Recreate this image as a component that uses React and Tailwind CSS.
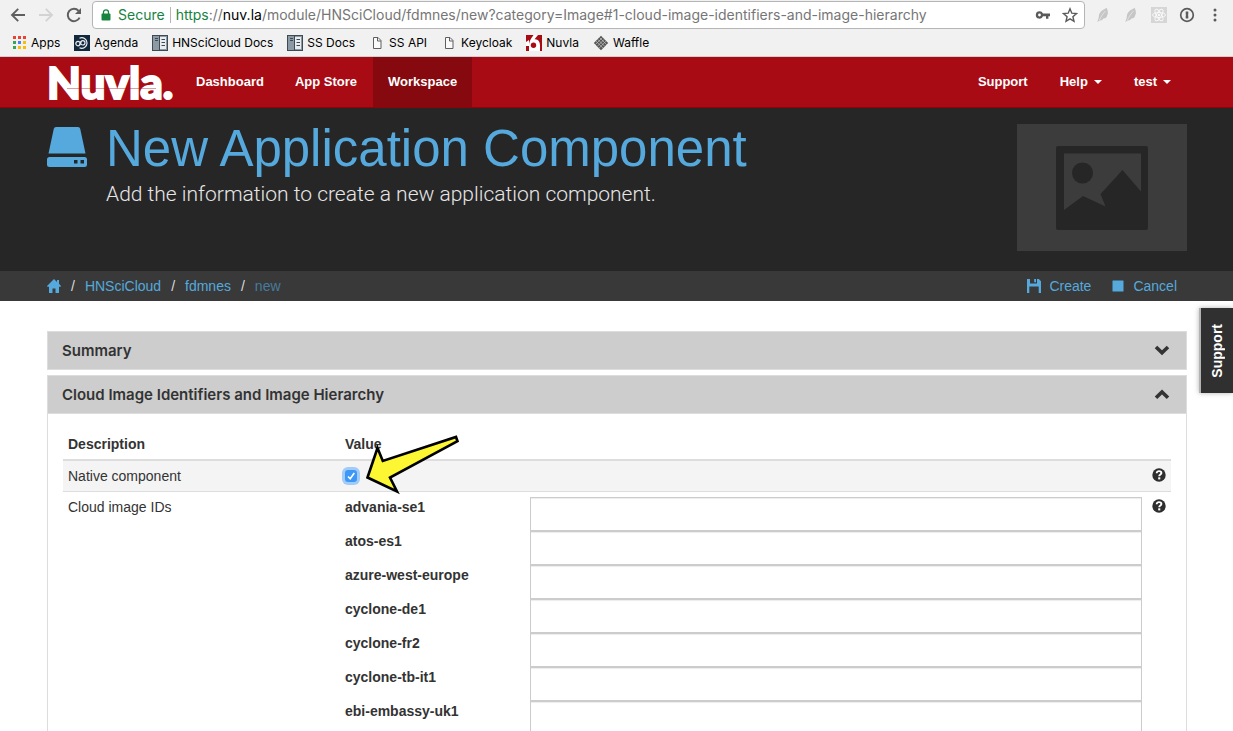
import React from "react";

const CLOUDS = [
  "advania-se1",
  "atos-es1",
  "azure-west-europe",
  "cyclone-de1",
  "cyclone-fr2",
  "cyclone-tb-it1",
  "ebi-embassy-uk1",
];

/* ---------- browser icons ---------- */

function BackIcon({ className }) {
  return (
    <svg viewBox="0 0 16 16" className={className} fill="none" stroke="currentColor" strokeWidth="1.9">
      <path d="M15 8H2.5M8.2 1.8 2 8l6.2 6.2" />
    </svg>
  );
}

function ReloadIcon() {
  return (
    <svg viewBox="0 0 16 16" className="size-4 text-[#5f5f5f]">
      <path d="M13.6 10.6A6.2 6.2 0 1 1 12.6 3.8" fill="none" stroke="currentColor" strokeWidth="2" />
      <path d="M15 1v6H9z" fill="currentColor" />
    </svg>
  );
}

function LockIcon() {
  return (
    <svg viewBox="0 0 10 12" className="h-3 w-2.5 text-[#16833f]">
      <rect x="0.5" y="4.5" width="9" height="7" rx="1" fill="currentColor" />
      <path d="M2.5 5V3.3a2.5 2.5 0 0 1 5 0V5" fill="none" stroke="currentColor" strokeWidth="1.3" />
    </svg>
  );
}

function KeyIcon() {
  return (
    <svg viewBox="0 0 16 8" className="h-2 w-4 text-[#5a5a5a]">
      <path
        fill="currentColor"
        fillRule="evenodd"
        d="M4.5 0.3a3.7 3.7 0 1 0 3.5 5H11v2.4h2.4V5.3H15V2.6H8A3.7 3.7 0 0 0 4.5 .3zm0 2.3a1.4 1.4 0 1 1 0 2.8 1.4 1.4 0 0 1 0-2.8z"
      />
    </svg>
  );
}

function StarIcon() {
  return (
    <svg viewBox="0 0 16 16" className="size-4 text-[#5a5a5a]" fill="none" stroke="currentColor" strokeWidth="1.4">
      <path d="M8 1.8l1.8 4.4 4.7.4-3.6 3.1 1.1 4.6L8 11.8l-4 2.5 1.1-4.6L1.500 6.600l4.700-.4z" />
    </svg>
  );
}

function FeatherIcon() {
  return (
    <svg viewBox="0 0 16 16" className="size-4">
      <path d="M11.500 0.800C9.500 2.500 6 3.500 4.500 6.500c-1 2-.5 3.500-1 5l-1.300 3.700 2.300-1.800c2 .2 3.200-.4 3.800-1.900 2 .2 3.400-.8 3.700-2.700 1.500-2 1-5.500-.5-8z" fill="#c6c6c6" />
      <path d="M10.500 4C8 6.500 6 9.500 4.500 13" fill="none" stroke="#e2e2e2" strokeWidth="1" />
    </svg>
  );
}

function AtomIcon() {
  return (
    <svg viewBox="0 0 16 16" className="size-4">
      <rect width="16" height="16" fill="#d6d6d6" />
      <g fill="none" stroke="#f8f8f8" strokeWidth="1">
        <ellipse cx="8" cy="8" rx="6.500" ry="2.500" />
        <ellipse cx="8" cy="8" rx="6.500" ry="2.500" transform="rotate(60 8 8)" />
        <ellipse cx="8" cy="8" rx="6.500" ry="2.500" transform="rotate(120 8 8)" />
      </g>
      <circle cx="8" cy="8" r="1.300" fill="#f8f8f8" />
    </svg>
  );
}

function PasswordIcon() {
  return (
    <svg viewBox="0 0 16 16" className="size-4 text-[#5a5a5a]">
      <circle cx="8" cy="8" r="6.300" fill="none" stroke="currentColor" strokeWidth="1.700" />
      <path d="M6.700 4.500h2.600v3l-.6.500.6.500v3H6.700v-3l.6-.5-.6-.5z" fill="currentColor" />
    </svg>
  );
}

function MenuIcon() {
  return (
    <svg viewBox="0 0 16 16" className="size-4 text-[#5a5a5a]" fill="currentColor">
      <circle cx="8" cy="3" r="1.500" />
      <circle cx="8" cy="8" r="1.500" />
      <circle cx="8" cy="13" r="1.500" />
    </svg>
  );
}

function AppsIcon() {
  const colors = ["#ea4335", "#ea4335", "#ea4335", "#34a853", "#4285f4", "#fbbc05", "#34a853", "#fbbc05", "#fbbc05"];
  return (
    <svg viewBox="0 0 16 16" className="size-4">
      {colors.map((c, i) => (
        <rect key={i} x={2 + (i % 3) * 5} y={1 + Math.floor(i / 3) * 5} width="3" height="3" fill={c} />
      ))}
    </svg>
  );
}

function AgendaIcon() {
  return (
    <svg viewBox="0 0 16 16" className="size-4">
      <rect width="16" height="16" fill="#12283c" />
      <g fill="none" stroke="#e8edf2" strokeWidth="1.200">
        <path d="M5.500 3.200a5.300 5.300 0 1 1 0 9.600" />
        <circle cx="4" cy="8.600" r="2.200" />
        <circle cx="8.800" cy="7.800" r="2.200" />
        <path d="M5.500 10 7.300 6.300" />
      </g>
    </svg>
  );
}

function DocsIcon() {
  return (
    <svg viewBox="0 0 16 16" className="size-4">
      <rect x=".5" y=".5" width="15" height="15" fill="#8b9aa5" stroke="#3f4a52" />
      <rect x="8" y="2" width="6" height="12" fill="#e9edf0" />
      <path d="M7.500 1v14" stroke="#3f4a52" />
      <path d="M3 3.500h3M3 5.500h3M9.500 4.500H13M9.500 7.500H13M9.500 10.500H13" stroke="#3f4a52" />
    </svg>
  );
}

function PageIcon() {
  return (
    <svg viewBox="0 0 16 16" className="size-4" fill="none" stroke="#5f5f5f">
      <path d="M4.500 2.500h4.500l3 3v8h-7.500z" fill="#fafafa" />
      <path d="M8.500 2.500v3.500H12" />
    </svg>
  );
}

function NuvlaIcon() {
  return (
    <svg viewBox="0 0 16 16" className="size-4">
      <rect width="16" height="16" fill="#a90b14" />
      <path d="M7.500 0H12L8.500 4.200c3.500-.4 5.500 2.500 5.500 6.300V16H3v-5.500C3 6 5.500 3 7.500 0z" fill="#fff" />
      <path d="M0 7l3-2v6H0z" fill="#fff" />
      <circle cx="7.500" cy="10.300" r="2.700" fill="#a90b14" />
    </svg>
  );
}

function WaffleIcon() {
  return (
    <svg viewBox="0 0 16 16" className="size-4">
      <path d="M8 .8 15.200 8 8 15.200.8 8z" fill="#555" />
      <path
        d="M2.800 6 10 13.200M4.600 4.200 11.800 11.400M6.400 2.400 13.600 9.600M6 13.200 13.200 6M4.200 11.400 11.400 4.200M2.400 9.600 9.600 2.400"
        stroke="#c4c4c4"
        strokeWidth=".7"
      />
    </svg>
  );
}

/* ---------- page icons ---------- */

function DiskIcon() {
  return (
    <svg viewBox="0 0 40 40" className="size-10 text-[#55a9dd]">
      <path
        fill="currentColor"
        fillRule="evenodd"
        d="M9 0h22q1.800 0 2.200 1.800L38.500 26.500h-37L6.800 1.800Q7.200 0 9 0zM2.500 30h35q2.500 0 2.500 2.500v5q0 2.500-2.500 2.500h-35Q0 40 0 37.500v-5Q0 30 2.500 30zM27 33v3.500h3.500V33zM33.500 33v3.500H37V33z"
      />
    </svg>
  );
}

function HomeIcon() {
  return (
    <svg viewBox="0 0 14 14" className="size-3.5" fill="currentColor">
      <path d="M7 0l3 2.900V1h2v3.800l2 2.200-.4.800H12V14H8.500V9.500h-3V14H2V7.800H.4L0 7z" />
    </svg>
  );
}

function SaveIcon() {
  return (
    <svg viewBox="0 0 14 14" className="size-3.5" fill="currentColor">
      <path fillRule="evenodd" d="M0 0h3v4.500h7V0h1.800L14 2.200V14h-2.300V7.500H2.300V14H0zM7.200 0H9v3.300H7.200z" />
    </svg>
  );
}

function StopIcon() {
  return (
    <svg viewBox="0 0 14 14" className="size-3.5" fill="currentColor">
      <rect x="1.500" y="1.500" width="11" height="11" rx=".5" />
    </svg>
  );
}

function Chevron({ up }) {
  return (
    <svg viewBox="0 0 16 16" className="size-4" fill="none" stroke="#333" strokeWidth="3.600">
      {up ? <path d="M2 10.700 8 4.900l6 5.800" /> : <path d="M2 4l6 5.800L14 4" />}
    </svg>
  );
}

function HelpIcon() {
  return (
    <svg viewBox="0 0 14 14" className="size-3.5">
      <circle cx="7" cy="7" r="6.700" fill="#2e2e2e" />
      <path d="M4.700 5.300C4.700 3.700 5.700 3.100 7 3.100s2.400.7 2.400 1.900c0 1.500-2.200 1.500-2.200 3.200" fill="none" stroke="#fff" strokeWidth="1.900" />
      <rect x="6.200" y="9.300" width="2.100" height="2.100" fill="#fff" />
    </svg>
  );
}

function PlaceholderImage() {
  return (
    <svg viewBox="0 0 170 127" className="h-[127px] w-[170px]" role="img" aria-label="No image">
      <rect width="170" height="127" fill="#3c3c3c" />
      <rect x="39" y="22" width="92" height="84" rx="2" fill="#262626" />
      <path d="M47 29.500h77v38L105.500 46 83.500 70l5 12.500L66 72 47 86z" fill="#3c3c3c" />
      <circle cx="65.500" cy="49" r="10.500" fill="#262626" />
    </svg>
  );
}

function PointerArrow() {
  return (
    <svg viewBox="0 0 100 66" className="pointer-events-none absolute -top-[33px] left-[17px] h-[66px] w-[100px]">
      <path
        d="M5.500 44.500 15.500 15l5.300 13L94 4l1.500 4.200L28 44.500l7 14z"
        fill="#fdf733"
        stroke="#000"
        strokeWidth="2.600"
      />
    </svg>
  );
}

function Caret() {
  return <span className="border-x-4 border-t-4 border-x-transparent border-t-white" />;
}

/* ---------- browser chrome ---------- */

function Bookmark({ icon, children }) {
  return (
    <a href="#" className="flex items-center gap-1">
      {icon}
      <span>{children}</span>
    </a>
  );
}

function BrowserChrome() {
  return (
    <div className="shrink-0 border-b border-[#cfcfcf] bg-[#f1f1f1] font-['Inter',sans-serif]">
      <div className="flex h-[30px] items-center">
        <div className="flex w-[92px] shrink-0 items-center gap-3 pl-2.5">
          <button type="button" aria-label="Back">
            <BackIcon className="size-4 text-[#5f5f5f]" />
          </button>
          <button type="button" aria-label="Forward">
            <BackIcon className="size-4 rotate-180 text-[#d3d3d3]" />
          </button>
          <button type="button" aria-label="Reload">
            <ReloadIcon />
          </button>
        </div>
        <div className="flex h-7 min-w-0 flex-1 items-center rounded border border-[#b5b5b5] bg-white pr-1.5 pl-2 text-sm">
          <LockIcon />
          <span className="ml-[7px] text-[#16833f]">Secure</span>
          <span className="mx-[5px] h-4 w-px bg-[#b5b5b5]" />
          <span className="min-w-0 flex-1 truncate text-[#767676]">
            <span className="text-[#16833f]">https</span>://<span className="text-black">nuv.la</span>
            /module/HNSciCloud/fdmnes/new?category=Image#1-cloud-image-identifiers-and-image-hierarchy
          </span>
          <span className="flex items-center gap-[11px]">
            <button type="button" aria-label="Saved passwords">
              <KeyIcon />
            </button>
            <button type="button" aria-label="Bookmark this page">
              <StarIcon />
            </button>
          </span>
        </div>
        <div className="flex items-center gap-3 pr-2.5 pl-2.5">
          <FeatherIcon />
          <FeatherIcon />
          <AtomIcon />
          <PasswordIcon />
          <button type="button" aria-label="Menu">
            <MenuIcon />
          </button>
        </div>
      </div>
      <nav aria-label="Bookmarks" className="flex h-[26px] items-center gap-[14px] pl-[11px] text-xs text-black">
        <Bookmark icon={<AppsIcon />}>Apps</Bookmark>
        <Bookmark icon={<AgendaIcon />}>Agenda</Bookmark>
        <Bookmark icon={<DocsIcon />}>HNSciCloud Docs</Bookmark>
        <Bookmark icon={<DocsIcon />}>SS Docs</Bookmark>
        <Bookmark icon={<PageIcon />}>SS API</Bookmark>
        <Bookmark icon={<PageIcon />}>Keycloak</Bookmark>
        <Bookmark icon={<NuvlaIcon />}>Nuvla</Bookmark>
        <Bookmark icon={<WaffleIcon />}>Waffle</Bookmark>
      </nav>
    </div>
  );
}

/* ---------- page ---------- */

function NavBar() {
  return (
    <nav className="flex gap-px border-b border-[#8f0209] bg-[#a90b14] pr-[46px] pl-[47px] text-[13px] font-bold text-white">
      <a
        href="#"
        className="relative flex w-[133px] items-center font-['Lato_Black','Lato',sans-serif] text-[44px] leading-[50px] font-black [-webkit-text-stroke:2px_white]"
      >
        Nuvla.
        <span className="absolute top-[31px] right-6 left-5 h-px bg-[#a90b14]/40" />
      </a>
      <a href="#" className="flex h-[50px] items-center px-[15px]">Dashboard</a>
      <a href="#" className="flex h-[50px] items-center px-[15px]">App Store</a>
      <a href="#" aria-current="page" className="flex h-[50px] items-center bg-[#85090f] px-[15px]">Workspace</a>
      <div className="ml-auto flex">
        <a href="#" className="flex h-[50px] items-center px-4">Support</a>
        <button type="button" className="flex h-[50px] items-center gap-1.5 px-4">
          Help <Caret />
        </button>
        <button type="button" className="flex h-[50px] items-center gap-1.5 px-4">
          test <Caret />
        </button>
      </div>
    </nav>
  );
}

function PageHeader() {
  return (
    <header className="bg-[#262626]">
      <div className="flex h-[163px] pr-[46px] pl-[47px]">
        <div className="w-[59px] shrink-0 pt-[19px]">
          <DiskIcon />
        </div>
        <div className="flex-1 pt-[13px]">
          <h1 className="text-[51px] leading-[56px] text-[#55a9dd]">New Application Component</h1>
          <p className="font-['Roboto',sans-serif] text-[21px] leading-[34px] font-light text-[#e6e6e6]">
            Add the information to create a new application component.
          </p>
        </div>
        <div className="pt-4">
          <PlaceholderImage />
        </div>
      </div>
      <div className="flex h-[30px] items-center justify-between bg-[#393939] pr-[46px] pl-[47px] text-sm text-[#55a9dd]">
        <nav aria-label="Breadcrumb" className="flex items-center gap-2.5">
          <a href="#" aria-label="Home">
            <HomeIcon />
          </a>
          <span className="text-[#dcdcdc]">/</span>
          <a href="#">HNSciCloud</a>
          <span className="text-[#dcdcdc]">/</span>
          <a href="#">fdmnes</a>
          <span className="text-[#dcdcdc]">/</span>
          <span className="text-[#467b9e]">new</span>
        </nav>
        <div className="flex items-center gap-5 pr-2.5">
          <button type="button" className="flex items-center gap-2">
            <SaveIcon /> Create
          </button>
          <button type="button" className="flex items-center gap-2">
            <StopIcon /> Cancel
          </button>
        </div>
      </div>
    </header>
  );
}

function PanelHeading({ title, open }) {
  return (
    <h2>
      <button
        type="button"
        aria-expanded={open}
        className="flex h-[37px] w-full items-center justify-between bg-[#cdcdcd] pr-4 pl-[14px] font-['Inter',sans-serif] text-[15px] font-semibold text-[#333]"
      >
        <span className="pt-0.5">{title}</span>
        <Chevron up={open} />
      </button>
    </h2>
  );
}

function ImageTable() {
  return (
    <table className="w-full table-fixed border-collapse text-left align-top text-sm leading-5 text-[#333]">
      <colgroup>
        <col className="w-[25%]" />
        <col />
        <col className="w-[24px]" />
      </colgroup>
      <thead>
        <tr className="border-b-2 border-[#ddd]">
          <th className="p-[5px]">Description</th>
          <th className="p-[5px]">Value</th>
          <th className="p-[5px]" aria-label="Help" />
        </tr>
      </thead>
      <tbody>
        <tr className="border-b border-[#ddd] bg-[#f4f4f4]">
          <td className="p-[5px]">
            <label htmlFor="native">Native component</label>
          </td>
          <td className="p-[5px]">
            <div className="relative flex h-5 items-center">
              <input
                id="native"
                type="checkbox"
                defaultChecked
                className="size-3 appearance-none rounded-[3px] bg-[#3d97f7] ring-[3px] ring-[#a1cbf8]"
              />
              <svg viewBox="0 0 12 12" className="pointer-events-none absolute left-0 size-3" fill="none" stroke="#fff" strokeWidth="1.600">
                <path d="M3 6.500l2.200 2.300L9.300 3" />
              </svg>
              <PointerArrow />
            </div>
          </td>
          <td className="py-[5px] align-top">
            <button type="button" aria-label="Help on native component" className="flex h-[18px] items-center pl-[5px]">
              <HelpIcon />
            </button>
          </td>
        </tr>
        <tr>
          <td className="p-[5px] align-top">Cloud image IDs</td>
          <td className="p-[5px]">
            {CLOUDS.map((name) => (
              <div key={name} className="flex">
                <label htmlFor={name} className="w-[185px] shrink-0 font-bold">
                  {name}
                </label>
                <input
                  id={name}
                  type="text"
                  className="h-[34px] min-w-0 flex-1 border border-[#ccc] bg-white px-3 shadow-[inset_0_1px_1px_rgba(0,0,0,0.075)]"
                />
              </div>
            ))}
          </td>
          <td className="py-[5px] align-top">
            <button type="button" aria-label="Help on cloud image IDs" className="flex h-[18px] items-center pl-[5px]">
              <HelpIcon />
            </button>
          </td>
        </tr>
      </tbody>
    </table>
  );
}

export default function App() {
  return (
    <div className="flex h-screen flex-col overflow-hidden bg-white font-['Liberation_Sans',Arial,sans-serif]">
      <BrowserChrome />
      <div className="relative min-h-0 flex-1 overflow-hidden">
        <NavBar />
        <PageHeader />
        <main className="flex flex-col gap-[5px] pt-[30px] pr-[46px] pl-[47px]">
          <section className="border border-[#ddd]">
            <PanelHeading title="Summary" open={false} />
          </section>
          <section className="border border-[#ddd]">
            <PanelHeading title="Cloud Image Identifiers and Image Hierarchy" open />
            <div className="border-t border-[#ddd] p-[15px]">
              <ImageTable />
            </div>
          </section>
        </main>
        <button
          type="button"
          className="absolute top-[251px] right-0 flex h-[85px] w-[34px] items-center justify-center border-l-2 border-[#b3b3b3] bg-[#303030] text-sm font-bold text-white shadow-[0_0_5px_rgba(0,0,0,0.3)]"
        >
          <span className="rotate-180 [writing-mode:vertical-rl]">Support</span>
        </button>
      </div>
    </div>
  );
}
